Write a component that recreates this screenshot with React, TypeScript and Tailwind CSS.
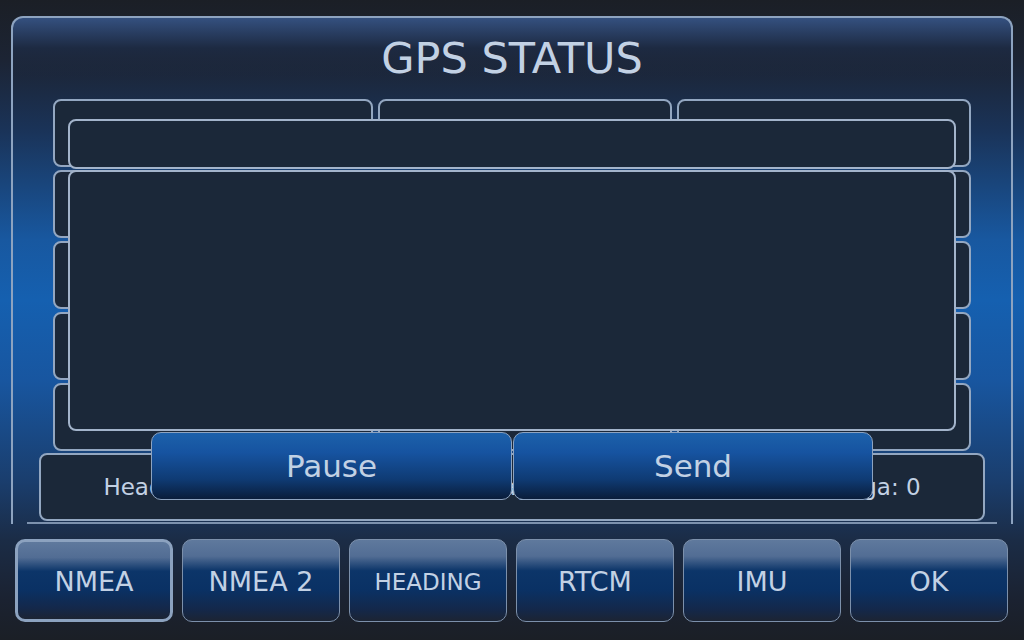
import React from "react";

const tabs = ["NMEA", "NMEA 2", "HEADING", "RTCM", "IMU", "OK"];

function Cell() {
  return <div className="h-[68px] rounded-[8px] border-2 border-[#93a7c1] bg-[#1b2839]" />;
}

function Tab({ label, active }: { label: string; active?: boolean }) {
  return (
    <div
      className={
        "flex h-[83px] w-[158px] shrink-0 items-center justify-center rounded-[10px] bg-[linear-gradient(to_bottom,#5f799d_0%,#526d94_20%,#0c3569_38%,#0a3164_62%,#14284a_86%,#1c2433_100%)] pt-[3px] text-[#c2d1e4] " +
        (active ? "border-[3px] border-[#8ca2bf]" : "border border-[#7c90ab]") +
        (label === "HEADING" ? " text-[23px]" : " text-[27px]")
      }
    >
      {label}
    </div>
  );
}

export default function App() {
  return (
    <div
      className="relative h-[640px] w-[1024px] overflow-hidden bg-[linear-gradient(to_bottom,#1b1f26_0px,#1c2434_60px,#1a3358_130px,#1858a0_240px,#1560b0_300px,#1856a0_380px,#1a3e6e_480px,#1b2c46_540px,#1b2231_600px,#1b1f26_640px)] text-[#c2d1e4]"
      style={{ fontFamily: "'DejaVu Sans', Verdana, sans-serif" }}
    >
      {/* main panel */}
      <div className="ml-[11px] mt-[16px] w-[1002px] rounded-t-[12px] border-2 border-b-0 border-[#8da3c0] bg-[linear-gradient(to_bottom,#34507f_0px,#1d2a42_30px,transparent_60px)]">
        <div className="mt-[17px] h-[46px] text-center text-[43px] leading-[46px]">GPS STATUS</div>

        <div className="ml-[40px] mt-[18px] grid grid-cols-[320px_294px_294px] gap-x-[5px] gap-y-[3px]">
          {Array.from({ length: 15 }).map((_, i) => (
            <Cell key={i} />
          ))}
        </div>

        <div className="ml-[26px] mt-[2px] flex h-[68px] w-[946px] items-center justify-center rounded-[8px] border-2 border-[#93a7c1] bg-[#1b2839] text-[23px] whitespace-pre">
          {"Heading speed: 0.00 kn   Heading age: 0.0 s   Integrity: 0.0   Omega: 0"}
        </div>

        <div className="mx-[14px] mt-[1px] h-[2px] bg-[#7d92ae]" />
      </div>

      {/* bottom tabs */}
      <div className="mt-[15px] flex gap-[9px] pl-[15px]">
        {tabs.map((t, i) => (
          <Tab key={t} label={t} active={i === 0} />
        ))}
      </div>

      {/* serial console overlay */}
      <div className="absolute left-[68px] top-[119px] flex w-[888px] flex-col">
        <div className="h-[50px] rounded-[8px] border-2 border-[#a3b4cb] bg-[#1b2839]" />
        <div className="mt-px h-[261px] rounded-[8px] border-2 border-[#a3b4cb] bg-[#1b2839]" />
        <div className="mt-px flex justify-center gap-[1px]">
          <div className="flex h-[68px] w-[361px] items-center justify-center rounded-[10px] border border-[#8da3c0] bg-[linear-gradient(to_bottom,#1c61ab_0%,#1653a0_30%,#0f3b74_70%,#0a1d3a_100%)] text-[31px]">
            Pause
          </div>
          <div className="flex h-[68px] w-[360px] items-center justify-center rounded-[10px] border border-[#8da3c0] bg-[linear-gradient(to_bottom,#1c61ab_0%,#1653a0_30%,#0f3b74_70%,#0a1d3a_100%)] text-[31px]">
            Send
          </div>
        </div>
      </div>
    </div>
  );
}
